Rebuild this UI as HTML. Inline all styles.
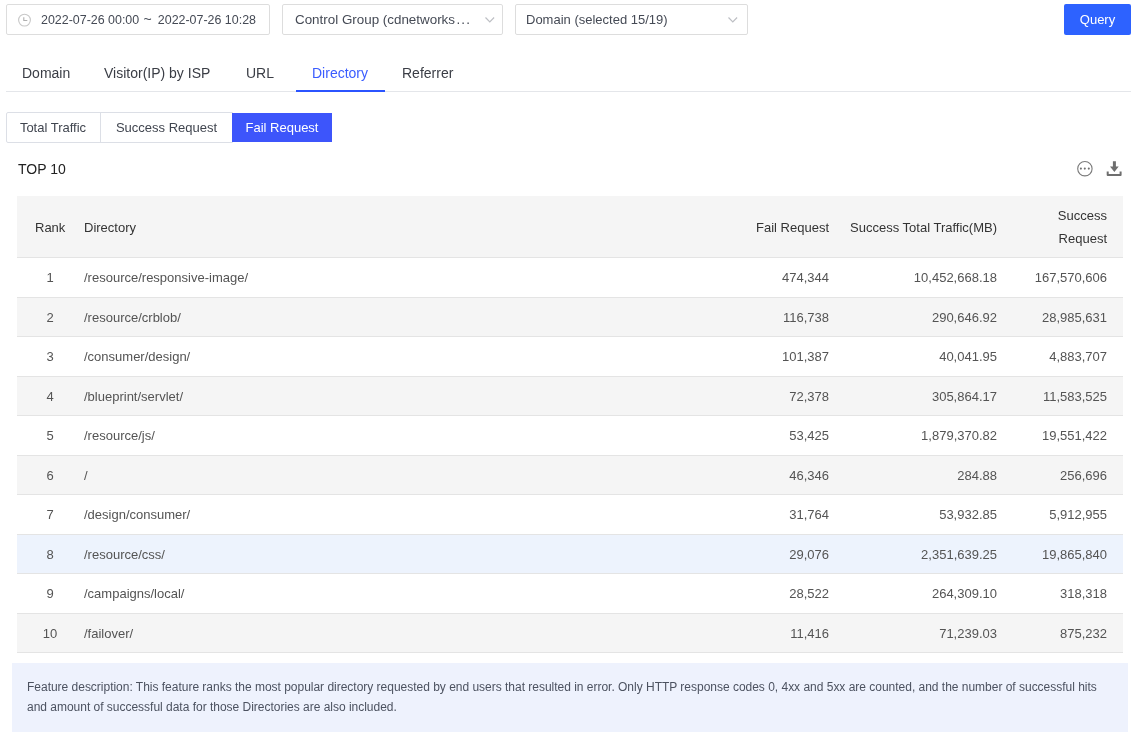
<!DOCTYPE html>
<html><head><meta charset="utf-8">
<style>
*{box-sizing:border-box;margin:0;padding:0}
html,body{width:1137px;height:741px;overflow:hidden;font-family:"Liberation Sans",sans-serif;color:#333}
.abs{position:absolute}
.box{position:absolute;top:4px;height:31px;border:1px solid #dddddd;border-radius:2px;background:#fff;font-size:13px;color:#454a55}
.box .t{position:absolute;top:7px;white-space:nowrap}
.chev{position:absolute;top:12px;width:10px;height:6px;overflow:visible}
.query{position:absolute;left:1064px;top:4px;width:67px;height:31px;background:#2d62ff;border-radius:2px;color:#fff;font-size:13px;text-align:center;line-height:31px}
.tab{position:absolute;top:65px;font-size:14px;color:#3a3d45;white-space:nowrap}
.tabline{position:absolute;left:6px;top:91px;width:1125px;height:1px;background:#e4e6ea}
.tabact{position:absolute;left:296px;top:90px;width:89px;height:2px;background:#2b54ff}
.seg{position:absolute;top:113px;height:29px;font-size:13px;color:#40454f;line-height:29px;text-align:center}
.top10{position:absolute;left:18px;top:161px;font-size:14px;color:#222}
.thead{position:absolute;left:17px;top:196px;width:1106px;height:62px;background:#f5f5f5;border-bottom:1px solid #e4e4e4;font-size:13px;color:#333}
.row{position:absolute;left:17px;width:1106px;height:39.5px;border-bottom:1px solid #e4e4e4;font-size:13px;color:#545454}
.c{position:absolute;top:12px;white-space:nowrap}
.r1{right:1106px}
.feat{position:absolute;left:12px;top:663px;width:1116px;height:69px;background:#eef2fd;font-size:12px;color:#4c5260;line-height:20px;padding:14px 15px;letter-spacing:-0.015px}
html{background:#fff}
body{will-change:transform;background:transparent}
</style></head>
<body>
<!-- date picker -->
<div class="box" style="left:6px;width:264px">
  <svg class="abs" style="left:11px;top:8px" width="14" height="14" viewBox="0 0 14 14"><circle cx="6.5" cy="7.1" r="5.9" fill="none" stroke="#c8c8c8" stroke-width="1.1"/><path d="M5.8 4.2V7.5H9.3" fill="none" stroke="#b0b0b0" stroke-width="1.1"/></svg>
  <span class="t" style="left:34px;font-size:12.45px;top:7.5px">2022-07-26 00:00</span><span class="t" style="left:136.5px;top:5.5px;font-size:14px">~</span><span class="t" style="left:150.8px;font-size:12.45px;top:7.5px">2022-07-26 10:28</span>
</div>
<div class="box" style="left:282px;width:221px">
  <span class="t" style="left:12px;font-size:13.4px;top:6.5px">Control Group (cdnetworks<span style="letter-spacing:1.1px;margin-left:1.5px">...</span></span>
  <svg class="chev" style="left:202px" viewBox="0 0 10 6"><path d="M0.5 0.5L4.8 4.8L9.1 0.5" fill="none" stroke="#bdbfc4" stroke-width="1.2"/></svg>
</div>
<div class="box" style="left:515px;width:233px">
  <span class="t" style="left:10px;top:6.5px">Domain (selected 15/19)</span>
  <svg class="chev" style="left:212px" viewBox="0 0 10 6"><path d="M0.5 0.5L4.8 4.8L9.1 0.5" fill="none" stroke="#bdbfc4" stroke-width="1.2"/></svg>
</div>
<div class="query">Query</div>

<!-- tabs -->
<div class="tab" style="left:22px">Domain</div>
<div class="tab" style="left:104px">Visitor(IP) by ISP</div>
<div class="tab" style="left:246px">URL</div>
<div class="tab" style="left:312px;color:#3a5cff">Directory</div>
<div class="tab" style="left:402px">Referrer</div>
<div class="tabline"></div>
<div class="tabact"></div>

<!-- segmented -->
<div class="abs" style="left:6px;top:112px;width:227px;height:31px;border:1px solid #dcdfe6;border-radius:2px 0 0 2px;background:#fff"></div>
<div class="abs" style="left:100px;top:113px;width:1px;height:29px;background:#dcdfe6"></div>
<div class="seg" style="left:6px;width:94px">Total Traffic</div>
<div class="seg" style="left:101px;width:131px">Success Request</div>
<div class="seg" style="left:232px;width:100px;background:#3d55fb;color:#fff">Fail Request</div>

<div class="top10">TOP 10</div>
<svg class="abs" style="left:1076px;top:160px" width="18" height="18" viewBox="0 0 18 18"><circle cx="8.9" cy="8.7" r="7.2" fill="none" stroke="#7a7a7a" stroke-width="1.1"/><circle cx="4.9" cy="8.6" r="1.05" fill="#707070"/><circle cx="8.8" cy="8.6" r="1.05" fill="#707070"/><circle cx="12.8" cy="8.6" r="1.05" fill="#707070"/></svg>
<svg class="abs" style="left:1106px;top:160px" width="18" height="18" viewBox="0 0 18 18"><path d="M6.9 1.2H9.9V6.6H12.7L8.4 12L4 6.6H6.9Z" fill="#6e6e6e"/><path d="M1.7 11.6V15.1H14.6V11.6" fill="none" stroke="#6e6e6e" stroke-width="2" stroke-linejoin="round"/></svg>

<!-- table -->
<div class="thead">
  <span class="c" style="left:18px;top:24px">Rank</span>
  <span class="c" style="left:67px;top:24px">Directory</span>
  <span class="c" style="right:294px;top:24px">Fail Request</span>
  <span class="c" style="right:126px;top:24px">Success Total Traffic(MB)</span>
  <span class="c" style="right:16px;top:9px;text-align:right;line-height:22.5px;white-space:normal;width:60px">Success Request</span>
</div>
<div class="row" style="top:258.0px;background:#fff"><span class="c" style="left:0;width:66px;text-align:center">1</span><span class="c" style="left:67px">/resource/responsive-image/</span><span class="c" style="right:294px">474,344</span><span class="c" style="right:126px">10,452,668.18</span><span class="c" style="right:16px">167,570,606</span></div>
<div class="row" style="top:297.5px;background:#f5f5f5"><span class="c" style="left:0;width:66px;text-align:center">2</span><span class="c" style="left:67px">/resource/crblob/</span><span class="c" style="right:294px">116,738</span><span class="c" style="right:126px">290,646.92</span><span class="c" style="right:16px">28,985,631</span></div>
<div class="row" style="top:337.0px;background:#fff"><span class="c" style="left:0;width:66px;text-align:center">3</span><span class="c" style="left:67px">/consumer/design/</span><span class="c" style="right:294px">101,387</span><span class="c" style="right:126px">40,041.95</span><span class="c" style="right:16px">4,883,707</span></div>
<div class="row" style="top:376.5px;background:#f5f5f5"><span class="c" style="left:0;width:66px;text-align:center">4</span><span class="c" style="left:67px">/blueprint/servlet/</span><span class="c" style="right:294px">72,378</span><span class="c" style="right:126px">305,864.17</span><span class="c" style="right:16px">11,583,525</span></div>
<div class="row" style="top:416.0px;background:#fff"><span class="c" style="left:0;width:66px;text-align:center">5</span><span class="c" style="left:67px">/resource/js/</span><span class="c" style="right:294px">53,425</span><span class="c" style="right:126px">1,879,370.82</span><span class="c" style="right:16px">19,551,422</span></div>
<div class="row" style="top:455.5px;background:#f5f5f5"><span class="c" style="left:0;width:66px;text-align:center">6</span><span class="c" style="left:67px">/</span><span class="c" style="right:294px">46,346</span><span class="c" style="right:126px">284.88</span><span class="c" style="right:16px">256,696</span></div>
<div class="row" style="top:495.0px;background:#fff"><span class="c" style="left:0;width:66px;text-align:center">7</span><span class="c" style="left:67px">/design/consumer/</span><span class="c" style="right:294px">31,764</span><span class="c" style="right:126px">53,932.85</span><span class="c" style="right:16px">5,912,955</span></div>
<div class="row" style="top:534.5px;background:#edf3fd"><span class="c" style="left:0;width:66px;text-align:center">8</span><span class="c" style="left:67px">/resource/css/</span><span class="c" style="right:294px">29,076</span><span class="c" style="right:126px">2,351,639.25</span><span class="c" style="right:16px">19,865,840</span></div>
<div class="row" style="top:574.0px;background:#fff"><span class="c" style="left:0;width:66px;text-align:center">9</span><span class="c" style="left:67px">/campaigns/local/</span><span class="c" style="right:294px">28,522</span><span class="c" style="right:126px">264,309.10</span><span class="c" style="right:16px">318,318</span></div>
<div class="row" style="top:613.5px;background:#f5f5f5"><span class="c" style="left:0;width:66px;text-align:center">10</span><span class="c" style="left:67px">/failover/</span><span class="c" style="right:294px">11,416</span><span class="c" style="right:126px">71,239.03</span><span class="c" style="right:16px">875,232</span></div>
<div class="feat">Feature description: This feature ranks the most popular directory requested by end users that resulted in error. Only HTTP response codes 0, 4xx and 5xx are counted, and the number of successful hits and amount of successful data for those Directories are also included.</div>
</body></html>
